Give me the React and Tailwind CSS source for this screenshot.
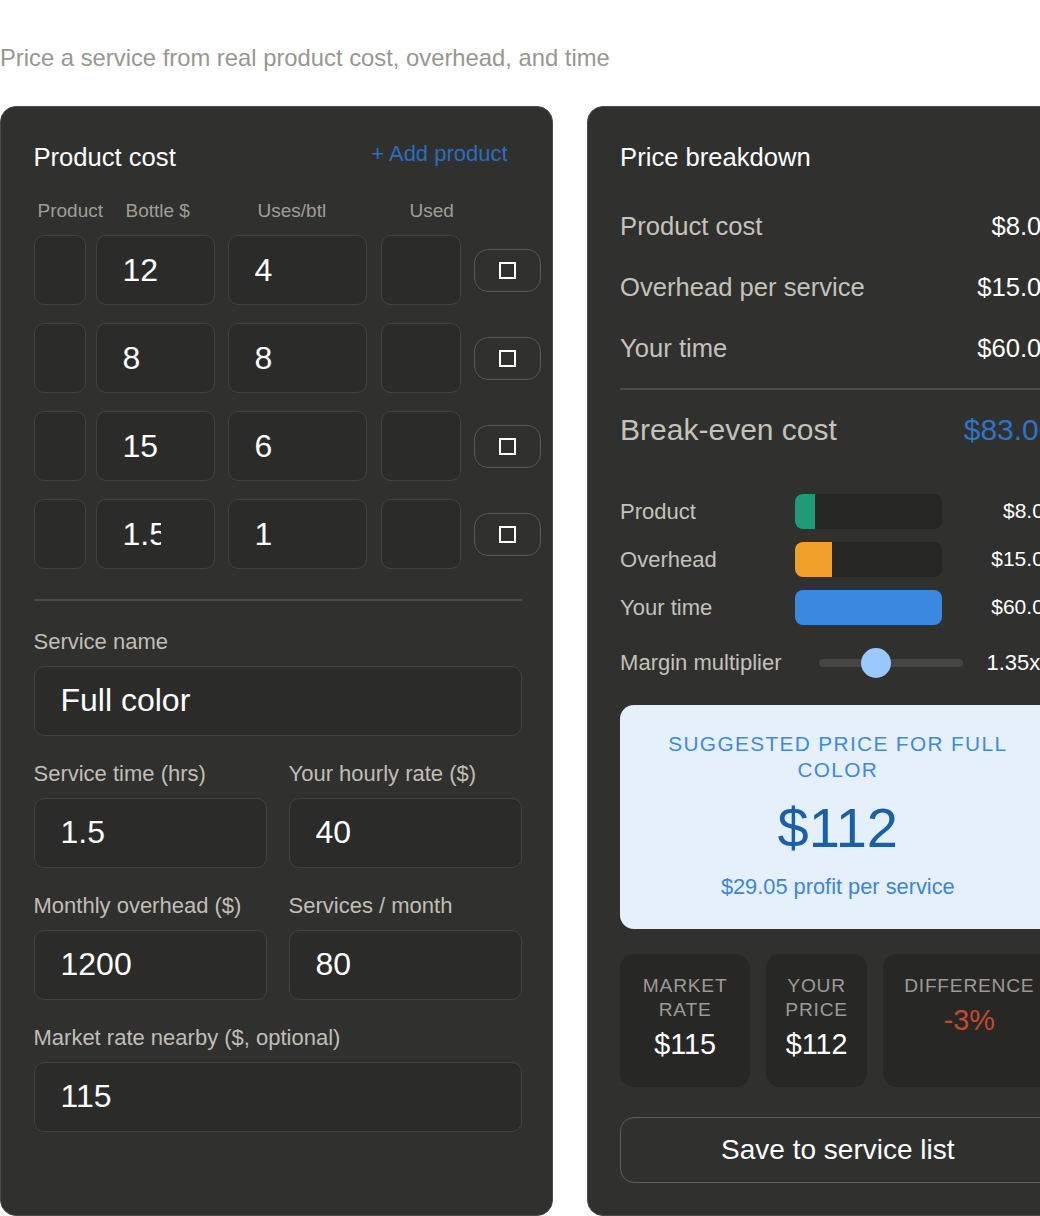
import React from 'react';

const products = [
    { bottle: '12', uses: '4' },
    { bottle: '8', uses: '8' },
    { bottle: '15', uses: '6' },
    { bottle: '1.5', uses: '1' },
];

const breakdown = [
    { label: 'Product cost', value: '$8.00' },
    { label: 'Overhead per service', value: '$15.00' },
    { label: 'Your time', value: '$60.00' },
];

const bars = [
    { label: 'Product', value: 8, color: 'bg-[#1f9c77]' },
    { label: 'Overhead', value: 15, color: 'bg-[#efa02b]' },
    { label: 'Your time', value: 60, color: 'bg-[#3a89e0]' },
];

const inputCls =
    'rounded-[10px] border-[1.5px] border-[#42423f] bg-[#2b2b29] text-white text-[32px] outline-none';

function Field({ label, value }) {
    return (
        <div>
            <div className="text-[22px] leading-[26px] text-[#c0beb6]">{label}</div>
            <input
                type="text"
                defaultValue={value}
                className={`${inputCls} mt-[11px] h-[70px] w-full pl-[26px] pr-[20px]`}
            />
        </div>
    );
}

function ProductRow({ row }) {
    return (
        <div className="flex h-[70px] items-center">
            <input type="text" defaultValue="" className={`${inputCls} h-full w-[52px] shrink-0 px-2`} />
            <input
                type="text"
                defaultValue={row.bottle}
                className={`${inputCls} ml-[10px] h-full w-[119px] shrink-0 pl-[26px] pr-[53px]`}
            />
            <input
                type="text"
                defaultValue={row.uses}
                className={`${inputCls} ml-[13px] h-full w-[139px] shrink-0 pl-[26px] pr-[53px]`}
            />
            <input type="text" defaultValue="" className={`${inputCls} ml-[14px] h-full w-[80px] shrink-0 px-2`} />
            <button className="ml-[13px] flex h-[43px] w-[67px] shrink-0 items-center justify-center rounded-[14px] border-[1.5px] border-[#5a5a57]">
                <span className="block h-[17px] w-[17px] border-2 border-white" />
            </button>
        </div>
    );
}

function App() {
    const max = Math.max(...bars.map(b => b.value));

    return (
        <div className="h-screen overflow-hidden bg-white font-['Liberation_Sans',Arial,sans-serif]">
            <div className="w-[1089px] pt-[43px]">
                <p className="text-[23.8px] leading-[30px] text-[#99978f]">
                    Price a service from real product cost, overhead, and time
                </p>

                <div className="mt-[33px] grid grid-cols-[minmax(0,1.1fr)_minmax(0,1fr)] gap-[34px]">
                    {/* Left: inputs */}
                    <section className="min-w-0 rounded-[16px] border-[1.5px] border-[#4b4b47] bg-[#30302e] pl-[32.5px] pr-[30px] pt-[35px] pb-[32px]">
                        <div className="flex h-[30px] items-center justify-between">
                            <h2 className="text-[25.6px] leading-[30px] text-white">Product cost</h2>
                            <button className="mb-[6px] mr-[14px] text-[22px] leading-[26px] text-[#2a6ebf]">+ Add product</button>
                        </div>

                        <div className="mt-[27px] flex h-[23px] text-[19px] leading-[23px] text-[#a09e96]">
                            <span className="w-[92px] shrink-0 pl-[4px]">Product</span>
                            <span className="w-[132px] shrink-0">Bottle $</span>
                            <span className="w-[152px] shrink-0">Uses/btl</span>
                            <span>Used</span>
                        </div>

                        <div className="mt-[13px] flex flex-col gap-[18px]">
                            {products.map((row, i) => (
                                <ProductRow key={i} row={row} />
                            ))}
                        </div>

                        <div className="mt-[30px] h-[1.5px] bg-[#4b4b47]" />

                        <div className="mt-[28px]">
                            <Field label="Service name" value="Full color" />
                        </div>
                        <div className="mt-[25px] grid grid-cols-2 gap-x-[22px] gap-y-[25px]">
                            <Field label="Service time (hrs)" value="1.5" />
                            <Field label="Your hourly rate ($)" value="40" />
                            <Field label="Monthly overhead ($)" value="1200" />
                            <Field label="Services / month" value="80" />
                        </div>
                        <div className="mt-[25px]">
                            <Field label="Market rate nearby ($, optional)" value="115" />
                        </div>
                    </section>

                    {/* Right: breakdown */}
                    <section className="min-w-0 rounded-[16px] border-[1.5px] border-[#4b4b47] bg-[#30302e] px-[32.5px] pt-[35px] pb-[32px]">
                        <h2 className="h-[30px] text-[25.6px] leading-[30px] text-white">Price breakdown</h2>

                        <div className="mt-[24px]">
                            {breakdown.map(r => (
                                <div key={r.label} className="flex h-[61px] items-center justify-between text-[25.6px]">
                                    <span className="text-[#c4c2ba]">{r.label}</span>
                                    <span className="text-white">{r.value}</span>
                                </div>
                            ))}
                        </div>
                        <div className="mt-[9px] h-[1.5px] bg-[#4b4b47]" />
                        <div className="mt-[22px] flex h-[36px] items-center justify-between text-[30px]">
                            <span className="text-[#c4c2ba]">Break-even cost</span>
                            <span className="text-[#2f74c6]">$83.00</span>
                        </div>

                        <div className="mt-[46px] flex flex-col gap-[13px]">
                            {bars.map(b => (
                                <div key={b.label} className="grid h-[35px] grid-cols-[175px_147px_1fr] items-center">
                                    <span className="text-[22px] text-[#c4c2ba]">{b.label}</span>
                                    <div className="h-[35px] overflow-hidden rounded-[8px] bg-[#262624]">
                                        <div className={`h-full ${b.color}`} style={{ width: `${(b.value / max) * 100}%` }} />
                                    </div>
                                    <span className="text-right text-[21px] text-white">${b.value.toFixed(2)}</span>
                                </div>
                            ))}
                        </div>

                        <div className="mt-[23px] flex h-[30px] items-center gap-[24px]">
                            <span className="w-[175px] shrink-0 text-[22px] text-[#c4c2ba]">Margin multiplier</span>
                            <div className="relative h-[8px] flex-1 rounded-full bg-[#454543]">
                                <div className="absolute left-[42px] top-1/2 h-[30px] w-[30px] -translate-y-1/2 rounded-full bg-[#9ac8fd]" />
                            </div>
                            <span className="w-[69px] shrink-0 text-[22px] text-white">1.35x</span>
                        </div>

                        <div className="mt-[27px] rounded-[14px] bg-[#e6f0fb] px-[24px] pt-[26px] pb-[29px] text-center">
                            <div className="text-[20.8px] uppercase leading-[26px] tracking-[0.066em] text-[#3d8be0]">
                                Suggested price for Full color
                            </div>
                            <div className="mt-[15px] text-[56px] leading-[60px] text-[#1a5fa8]">$112</div>
                            <div className="mt-[16px] text-[21.8px] leading-[26px] text-[#3a86d8]">$29.05 profit per service</div>
                        </div>

                        <div className="mt-[25px] flex gap-[16px]">
                            <div className="w-[130px] shrink-0 rounded-[14px] bg-[#272725] px-[8px] pt-[20px] pb-[25px] text-center">
                                <div className="text-[19.2px] uppercase leading-[24px] tracking-[0.04em] text-[#9d9b94]">Market rate</div>
                                <div className="mt-[4px] text-[28.8px] leading-[36px] text-white">$115</div>
                            </div>
                            <div className="w-[101px] shrink-0 rounded-[14px] bg-[#272725] px-[8px] pt-[20px] pb-[25px] text-center">
                                <div className="text-[19.2px] uppercase leading-[24px] tracking-[0.04em] text-[#9d9b94]">Your price</div>
                                <div className="mt-[4px] text-[28.8px] leading-[36px] text-white">$112</div>
                            </div>
                            <div className="flex-1 rounded-[14px] bg-[#272725] px-[8px] pt-[20px] pb-[25px] text-center">
                                <div className="text-[19.2px] uppercase leading-[24px] tracking-[0.04em] text-[#9d9b94]">Difference</div>
                                <div className="mt-[4px] text-[28.8px] leading-[36px] text-[#c5492b]">-3%</div>
                            </div>
                        </div>

                        <button className="mt-[30px] h-[66px] w-full rounded-[14px] border-[1.5px] border-[#5d5d59] text-[28px] text-white">
                            Save to service list
                        </button>
                    </section>
                </div>
            </div>
        </div>
    );
}

export default App;
